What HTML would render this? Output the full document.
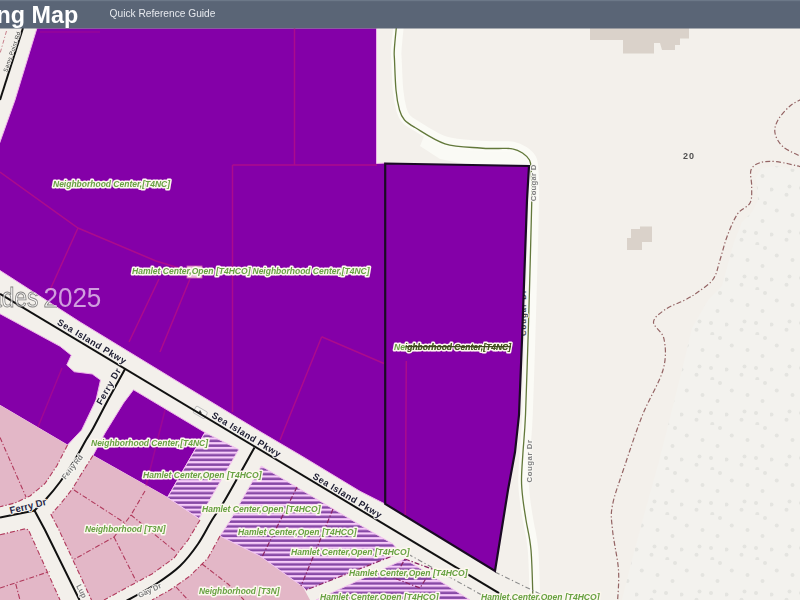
<!DOCTYPE html>
<html>
<head>
<meta charset="utf-8">
<title>Zoning Map</title>
<style>
html,body{margin:0;padding:0;background:#f3f0eb;}
body{width:800px;height:600px;overflow:hidden;position:relative;font-family:"Liberation Sans",sans-serif;}
svg{position:absolute;left:0;top:0;display:block;filter:blur(0.4px);}
text{font-family:"Liberation Sans",sans-serif;}
.zl{font-size:9.2px;font-weight:bold;font-style:italic;fill:#68a242;stroke:#fcf7ee;stroke-width:3.2px;stroke-linejoin:round;paint-order:stroke fill;}
.rd{font-size:9.2px;font-weight:bold;fill:#1c1c30;stroke:#f4f2ee;stroke-width:2px;stroke-linejoin:round;paint-order:stroke fill;}
.gr{font-size:7.8px;font-weight:bold;fill:#808080;stroke:#f7f6f2;stroke-width:2px;stroke-linejoin:round;paint-order:stroke fill;}
</style>
</head>
<body>
<svg width="800" height="600" viewBox="0 0 800 600">
<defs>
  <pattern id="hatch" width="10" height="4.75" patternUnits="userSpaceOnUse" patternTransform="translate(0,0.4)">
    <rect x="0" y="0" width="10" height="4.75" fill="#8748a6"/>
    <rect x="0" y="0" width="10" height="2.25" fill="#f7cdfa"/>
  </pattern>
  <pattern id="scrub" width="45" height="45" patternUnits="userSpaceOnUse" patternTransform="translate(5,20)">
    <g fill="#e4e4e0">
      <circle cx="6.75" cy="10.5" r="2"/><circle cx="22.5" cy="15" r="2"/><circle cx="37.5" cy="21" r="2"/>
      <circle cx="19.5" cy="31.5" r="2"/><circle cx="1.5" cy="34.5" r="2"/><circle cx="16.5" cy="39.8" r="2"/>
      <circle cx="32.3" cy="44" r="2"/><circle cx="40" cy="3" r="2"/><circle cx="31" cy="33" r="2"/>
    </g>
  </pattern>
  <clipPath id="selclip"><rect x="406.3" y="335" width="120" height="25"/></clipPath>
</defs>

<!-- base land -->
<rect x="0" y="0" width="800" height="600" fill="#f3f0eb"/>

<!-- scrub area -->
<g id="scrub-area">
  <path d="M800,170 L776,166 L762,168 L756,178 L758,200 L752,212 L742,222 L734,242 L728,264 L722,286 L708,300 L692,328 L682,370 L672,410 L658,465 L644,515 L632,560 L622,600 L800,600 Z" fill="#f3f2ee"/>
  <path d="M800,170 L776,166 L762,168 L756,178 L758,200 L752,212 L742,222 L734,242 L728,264 L722,286 L708,300 L692,328 L682,370 L672,410 L658,465 L644,515 L632,560 L622,600 L800,600 Z" fill="url(#scrub)"/>
</g>

<!-- buildings -->
<path d="M590,28 L689,28 L689,38.6 L680,38.6 L680,45 L675,45 L675,50 L662,50 L660,43 L654,43 L654,53.4 L623,53.4 L623,40 L590,40 Z" fill="#dad2ca"/>
<path d="M640,226.5 L652,226.5 L652,242 L642,242 L642,250 L627,250 L627,238 L631,238 L631,229 L640,229 Z" fill="#dad2ca"/>

<!-- boundary dash-dot -->
<g fill="none" stroke="#946464" stroke-width="1.2" stroke-dasharray="5 2.2 1.3 2.2">
  <path d="M802.0,167.0 C797.8,166.1 783.7,162.4 776.7,161.7 C769.7,161.0 764.3,161.3 760.0,162.7 C755.7,164.1 752.4,166.0 751.0,170.0 C749.6,174.0 751.9,181.2 751.7,186.7 C751.5,192.2 752.4,198.4 750.0,203.0 C747.6,207.6 741.3,208.4 737.5,214.0 C733.7,219.6 729.9,229.0 727.0,236.7 C724.1,244.4 722.3,252.9 720.0,260.0 C717.7,267.1 717.0,273.7 713.3,279.0 C709.6,284.3 702.7,288.5 698.0,292.0 C693.3,295.5 690.3,297.2 685.0,300.0 C679.7,302.8 671.2,305.3 666.0,309.0 C660.8,312.7 653.8,317.0 653.5,322.0 C653.2,327.0 662.4,331.0 664.0,339.0 C665.6,347.0 666.6,357.3 663.0,370.0 C659.4,382.7 648.8,399.2 642.5,415.0 C636.2,430.8 630.0,450.0 625.0,465.0 C620.0,480.0 614.6,494.2 612.5,505.0 C610.4,515.8 611.5,519.2 612.5,530.0 C613.5,540.8 617.7,558.0 618.5,570.0 C619.3,582.0 617.7,596.7 617.5,602.0"/>
  <path d="M802.0,99.0 C800.0,100.2 794.0,102.5 790.0,106.0 C786.0,109.5 780.5,115.5 778.0,120.0 C775.5,124.5 774.2,128.6 775.0,133.0 C775.8,137.4 778.5,142.7 783.0,146.7 C787.5,150.7 798.8,155.3 802.0,157.0"/>
</g>

<!-- Cougar Dr -->
<path d="M425,134 L445,143 L480,148 L512,148 L524,153 L531,163 L529,166 L470,165 L440,159 L420,146 Z" fill="#fafaf5"/>
<g fill="none" stroke-linejoin="round">
  <path d="M398.5,26.2 C398.1,30.2 396.6,44.5 396.3,50.1 C396.0,55.7 396.2,53.3 396.5,59.9 C396.8,66.5 397.2,81.5 398.0,89.8 C398.8,98.1 400.1,104.6 401.4,109.5 C402.8,114.3 403.6,116.0 406.0,118.7 C408.4,121.4 409.4,121.9 416.0,125.8 C422.6,129.6 434.9,138.5 445.6,141.8 C456.3,145.2 471.5,145.2 480.2,146.0 C488.8,146.8 492.1,146.4 497.5,146.5 C503.0,146.6 508.5,146.0 512.9,146.8 C517.2,147.6 520.5,149.3 523.6,151.3 C526.7,153.4 529.7,156.0 531.3,159.1 C532.9,162.2 532.8,163.1 533.2,169.9 C533.6,176.7 533.9,183.3 533.7,200.0 C533.6,216.7 532.6,246.7 532.0,270.1 C531.4,293.4 530.7,315.9 530.0,340.1 C529.2,364.2 528.3,396.4 527.5,415.1 C526.7,433.8 525.7,441.3 525.0,452.1 C524.3,462.9 523.5,472.1 523.5,480.0 C523.5,487.9 524.2,493.2 525.0,499.8 C525.7,506.4 526.6,511.3 528.0,519.7 C529.3,528.0 531.8,536.1 533.0,549.8 C534.2,563.5 534.7,593.2 535.0,601.9" stroke="#fbfbf6" stroke-width="10.5"/>
  <path d="M396.5,26.0 C396.1,30.0 394.6,44.3 394.3,50.0 C394.0,55.7 394.2,53.3 394.5,60.0 C394.8,66.7 395.2,81.7 396.0,90.0 C396.8,98.3 398.1,105.0 399.5,110.0 C400.9,115.0 401.9,117.1 404.5,120.0 C407.1,122.9 408.2,123.5 415.0,127.5 C421.8,131.5 434.2,140.3 445.0,143.8 C455.8,147.2 471.2,147.2 480.0,148.0 C488.8,148.8 492.1,148.4 497.5,148.5 C502.9,148.6 508.3,148.0 512.5,148.8 C516.7,149.5 519.7,151.1 522.5,153.0 C525.3,154.9 528.0,157.2 529.5,160.0 C531.0,162.8 530.8,163.3 531.2,170.0 C531.6,176.7 532.0,183.3 531.8,200.0 C531.5,216.7 530.6,246.7 530.0,270.0 C529.4,293.3 528.8,315.8 528.0,340.0 C527.2,364.2 526.3,396.3 525.5,415.0 C524.7,433.7 523.7,441.2 523.0,452.0 C522.3,462.8 521.5,472.0 521.5,480.0 C521.5,488.0 522.2,493.3 523.0,500.0 C523.8,506.7 524.7,511.7 526.0,520.0 C527.3,528.3 529.8,536.3 531.0,550.0 C532.2,563.7 532.7,593.3 533.0,602.0" stroke="#62783a" stroke-width="1.3"/>
</g>

<!-- zoning: big purple -->
<path d="M37,28 L376.5,28 L376.5,163.5 L386,163 L386,504.5 L360,491.3 L300,455 L260,431.5 L180,383 L80,322 L0,270.5 L-3,268.5 L-3,150 L0,142 L15,100 Z" fill="#8400a8" stroke="#efb4ea" stroke-width="1"/>
<!-- purple blocks south of pkwy -->
<path d="M-3,312 L0,313.75 L60,346.25 L71.25,355.25 L66.75,365 L74.25,371.75 L92.25,374 L100.5,380 L96,400 L81.7,430 L67.5,445 L0,405.25 L-3,403.5 Z" fill="#8400a8" stroke="#efb4ea" stroke-width="1"/>
<path d="M133.5,389.75 L205,432.5 L167.5,497.5 L93,455.5 L105,433 L123.5,403 Z" fill="#8400a8" stroke="#efb4ea" stroke-width="1"/>

<!-- pink T3N blocks -->
<g fill="#e3b7c7">
  <path d="M0,405.25 L67.5,445 L57,465.5 L45,483.5 L30,496 L15,503 L0,506.75 Z"/>
  <path d="M0,534.75 L25.5,528.75 L28.5,530 L60,600 L0,600 Z"/>
  <path d="M93,455.5 L167.5,497.5 L199,519 L200,520 L188,540 L174,558 L152,574 L126,588 L104,600 L91.5,600 L59,530 L51,514.5 L60,504.5 L72,489.5 L81,474.5 Z"/>
  <path d="M220,536 L260,556 L303,587 L310,600 L152,600 L170,590 L190,576 L208,558 Z"/>
</g>

<!-- hatch areas -->
<g fill="url(#hatch)" stroke="#f3c4ee" stroke-width="1">
  <path d="M205,432.5 L238.75,449.5 L199,518.5 L167.5,497.5 Z"/>
  <path d="M261.25,466 L360,525 L393,544 L400,553 L306,590 L303,587 L260,556 L220,536 L230.5,520 Z"/>
  <path d="M405,559 L470,600 L316,600 Z"/>
</g>

<!-- parcel dash-dot lines in pink -->
<g fill="none" stroke="#b03a5c" stroke-width="1.1" stroke-dasharray="5 2 1.3 2">
  <path d="M0,437.5 L26,497"/>
  <path d="M67.5,445 L57,465.5 L45,483.5 L30,496 L15,503 L0,506.75"/>
  <path d="M93,455.5 L81,474.5 L72,489.5 L60,504.5 L51,514.5 L59,530 L91.5,600"/>
  <path d="M0,534.75 L25.5,528.75 L28.5,530 L60,600"/>
  <path d="M0,588 L49.5,571.5"/>
  <path d="M15.75,584 L20,600"/>
  <path d="M74,490 L125,523"/>
  <path d="M131,515 L176,552"/>
  <path d="M145,491 L131,515 L125,523 L114,537 L73,560"/>
  <path d="M114,537 L136,581"/>
  <path d="M200,520 L188,540 L174,558 L152,574 L126,588 L104,600"/>
  <path d="M220,536 L208,558 L190,576 L170,590 L152,600"/>
  <path d="M202,564 L228,584 L244,600"/>
  <path d="M176,587 L188,600"/>
</g>
<path d="M6.5,31 L0,53.5" fill="none" stroke="#c8808c" stroke-width="1" stroke-dasharray="4 2 1.2 2"/>
<!-- dashed lines in hatch -->
<g fill="none" stroke="#8a2262" stroke-width="1.2" stroke-dasharray="5 2 1.3 2">
  <path d="M400,553 L306,590"/>
  <path d="M297,487 L262,557"/>
  <path d="M333,509 L301,586"/>
  <path d="M405,559 L432,569 L420,588 L394,578 Z"/>
</g>

<g fill="none" stroke="#8a8a8a" stroke-width="1.1" stroke-dasharray="5 2.5 1.3 2.5">
  <path d="M408,554 L480,594 L491,600"/>
  <path d="M495,572 L540,594 L552,600"/>
</g>
<g transform="translate(200.3,412.4) rotate(31)"><rect x="-6.5" y="-3.8" width="13" height="7.6" rx="1.5" fill="#f7f6f2" stroke="#bdbdbd" stroke-width="0.9"/><path d="M-1.5,-2 L2,0 L-1.5,2 Z" fill="#444"/></g>
<!-- road centerlines -->
<g fill="none" stroke="#111" stroke-width="2">
  <path d="M0,293.75 L520,605.75"/>
  <path d="M125.2,368.8 C122.4,374.0 113.4,390.0 108.0,400.0 C102.6,410.0 96.7,421.8 93.0,428.5 C89.3,435.2 89.0,434.8 86.0,440.0 C83.0,445.2 79.3,452.5 75.0,459.5 C70.7,466.5 64.8,475.5 60.0,482.0 C55.2,488.5 50.8,493.8 46.5,498.5 C42.2,503.2 36.5,508.5 34.5,510.5 L0,517.5"/>
  <path d="M34.5,510.5 L45,530 L79.5,600"/>
  <path d="M254.5,447.5 C249.6,456.2 232.1,487.9 225.0,500.0 C217.9,512.1 216.5,512.7 212.0,520.0 C207.5,527.3 203.3,536.3 198.0,544.0 C192.7,551.7 187.0,559.3 180.0,566.0 C173.0,572.7 164.7,578.3 156.0,584.0 C147.3,589.7 134.0,596.7 128.0,600.0 C122.0,603.3 121.3,603.3 120.0,604.0"/>
  <path d="M23,28 L0,100"/>
</g>

<!-- parcel lines in purple -->
<g fill="none" stroke="#c4127c" stroke-width="1.5" opacity="0.62">
  <path d="M294.5,28 L294.5,165"/>
  <path d="M232.5,165 L377,165"/>
  <path d="M232.5,165 L232.5,412"/>
  <path d="M0,172 L78,228 L156,261 L192,272"/>
  <path d="M78,228 L49.5,291"/>
  <path d="M159,279 L129,342"/>
  <path d="M190,279 L160,352"/>
  <path d="M321.7,336.7 L384,363.5"/>
  <path d="M321.7,336.7 L280,440"/>
  <path d="M40,32 L100,32" opacity="0.5"/>
  <path d="M62,368 L38,427" opacity="0.7"/>
  <path d="M165,410 L146,486" opacity="0.6"/>
</g>
<rect x="187" y="266" width="15" height="12" fill="#e9b4dc" stroke="#d070b0" stroke-width="0.8"/>

<text class="gr" transform="translate(525.6,336) rotate(-90)" textLength="46" lengthAdjust="spacing" style="fill:#3a3a3a">Cougar Dr</text>
<!-- black parcel -->
<path d="M385.2,163.5 L529,166 L527,200 L522,340 L519,415 L515,452 L508,490 L495,571 L385.2,504 Z" fill="#8400a8" stroke="#1a0a24" stroke-width="2.2" stroke-linejoin="miter"/>
<path d="M406.3,361 L405.3,515" fill="none" stroke="#c4127c" stroke-width="1.5" opacity="0.62"/>

<!-- labels -->
<g class="zl" transform="translate(0,-0.7)">
  <text x="53" y="187.5" textLength="117" lengthAdjust="spacingAndGlyphs">Neighborhood Center,[T4NC]</text>
  <text x="132" y="274.5" textLength="118.5" lengthAdjust="spacingAndGlyphs">Hamlet Center,Open [T4HCO]</text>
  <text x="252.5" y="274.5" textLength="117" lengthAdjust="spacingAndGlyphs">Neighborhood Center,[T4NC]</text>
  <text x="394" y="350.5" textLength="117" lengthAdjust="spacingAndGlyphs">Neighborhood Center,[T4NC]</text>
  <text x="394" y="350.5" textLength="117" lengthAdjust="spacingAndGlyphs" clip-path="url(#selclip)" style="fill:#4a5226;stroke:none">Neighborhood Center,[T4NC]</text>
  <path d="M405.5,347.3 L511,347.3" stroke="#3e4420" stroke-width="1.3" fill="none" style="stroke:#3e4420;stroke-width:1.3px"/>
  <text x="91" y="446.5" textLength="117" lengthAdjust="spacingAndGlyphs">Neighborhood Center,[T4NC]</text>
  <text x="143" y="478.5" textLength="118.5" lengthAdjust="spacingAndGlyphs">Hamlet Center,Open [T4HCO]</text>
  <text x="202" y="512.5" textLength="118.5" lengthAdjust="spacingAndGlyphs">Hamlet Center,Open [T4HCO]</text>
  <text x="238" y="535.5" textLength="118.5" lengthAdjust="spacingAndGlyphs">Hamlet Center,Open [T4HCO]</text>
  <text x="291" y="555.5" textLength="118.5" lengthAdjust="spacingAndGlyphs">Hamlet Center,Open [T4HCO]</text>
  <text x="349" y="576.5" textLength="118.5" lengthAdjust="spacingAndGlyphs">Hamlet Center,Open [T4HCO]</text>
  <text x="320" y="600.5" textLength="118.5" lengthAdjust="spacingAndGlyphs">Hamlet Center,Open [T4HCO]</text>
  <text x="481" y="600.5" textLength="118.5" lengthAdjust="spacingAndGlyphs">Hamlet Center,Open [T4HCO]</text>
  <text x="85" y="532.5" textLength="80.5" lengthAdjust="spacingAndGlyphs">Neighborhood [T3N]</text>
  <text x="199" y="594.5" textLength="80.5" lengthAdjust="spacingAndGlyphs">Neighborhood [T3N]</text>
</g>

<g class="rd">
  <text transform="translate(56.5,324) rotate(31)" textLength="78.5" lengthAdjust="spacing">Sea Island Pkwy</text>
  <text transform="translate(211,417) rotate(31)" textLength="78.5" lengthAdjust="spacing">Sea Island Pkwy</text>
  <text transform="translate(312,478) rotate(31)" textLength="78.5" lengthAdjust="spacing">Sea Island Pkwy</text>
  <text transform="translate(101.5,405.5) rotate(-60.6)" textLength="40" lengthAdjust="spacing">Ferry Dr</text>
  <text transform="translate(10.5,514) rotate(-14)" style="font-size:9.8px;fill:#2a2a48" textLength="37.5" lengthAdjust="spacing">Ferry Dr</text>
</g>
<text transform="translate(7,72.5) rotate(-71)" font-size="5.8" fill="#333" stroke="#f4f2ee" stroke-width="1.2" paint-order="stroke fill" textLength="42" lengthAdjust="spacing">Sams Point Rd</text>
<g class="gr">
  <text transform="translate(535.6,201.2) rotate(-90)" textLength="36.5" lengthAdjust="spacing">Cougar D</text>
  <text transform="translate(532,482.5) rotate(-90)" textLength="42.5" lengthAdjust="spacing">Cougar Dr</text>
  <text transform="translate(65.5,480) rotate(-52)" textLength="29" lengthAdjust="spacing">Ferry Rd</text>
  <text transform="translate(139.5,598) rotate(-25)" style="font-size:7.5px">Gay Dr</text>
  <text transform="translate(76,586) rotate(63)">Lup</text>
</g>
<text x="683" y="159.3" font-size="9" font-weight="bold" fill="#505050" letter-spacing="1">20</text>

<!-- header -->
<rect x="0" y="0" width="800" height="28.5" fill="#5a6576"/>
<rect x="0" y="0" width="800" height="1.2" fill="#6c7888"/>
<text x="-3.5" y="22.5" font-size="24" font-weight="bold" fill="#ffffff" textLength="81.7" lengthAdjust="spacingAndGlyphs">ng Map</text>
<text x="109.6" y="16.9" font-size="10.2" fill="#e6e9ee" textLength="105.8" lengthAdjust="spacingAndGlyphs">Quick Reference Guide</text>

<!-- watermark -->
<clipPath id="wmclip"><path d="M0,270.5 L80,322 L110,341 L110,376 L60,346.25 L0,313.75 Z"/></clipPath>
<g transform="translate(101.3,306.6) scale(1,1.06)" font-size="26" text-anchor="end">
  <text x="0" y="0" fill="#ffffff" fill-opacity="0.62">2025</text>
  <text x="-63" y="0" fill="#ffffff" fill-opacity="0.62" textLength="49" lengthAdjust="spacingAndGlyphs">ades</text>
</g>
<g clip-path="url(#wmclip)">
  <g transform="translate(101.3,306.6) scale(1,1.06)" font-size="26" text-anchor="end">
    <text x="0" y="0" fill="none" stroke="#333" stroke-opacity="0.6" stroke-width="0.9">2025</text>
    <text x="-63" y="0" fill="none" stroke="#333" stroke-opacity="0.6" stroke-width="0.9" textLength="49" lengthAdjust="spacingAndGlyphs">ades</text>
  </g>
</g>
</svg>
</body>
</html>
